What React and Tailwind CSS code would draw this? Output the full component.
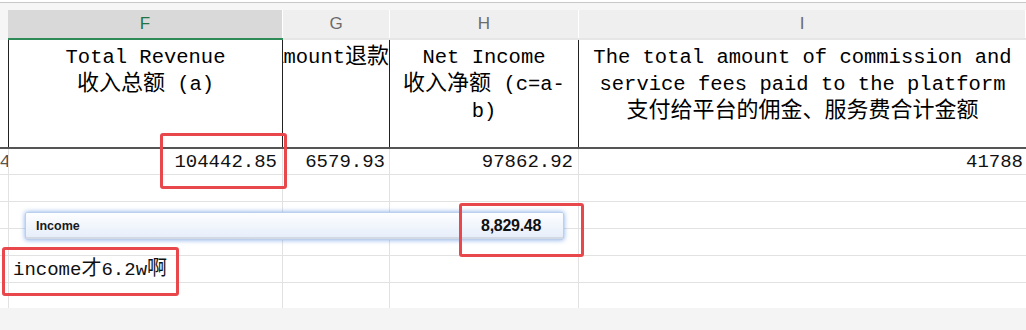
const mono = { fontFamily: '"Liberation Mono", "Noto Sans CJK SC", monospace' }

function Zh({ children }) {
  return <span className="text-[22px]">{children}</span>
}

function ColHead({ label, w, active }) {
  return (
    <div
      className={`flex items-center justify-center border-r border-white ${w} ${
        active ? 'bg-[#d9d9d9] text-[#217346]' : 'bg-[#efefef] text-[#6b6b6b]'
      }`}
    >
      {label}
    </div>
  )
}

function GridRow({ h, last, children }) {
  return (
    <div className={`flex ${h} ${last ? '' : 'border-b border-[#e2e2e2]'}`}>
      <div className="w-[9px] border-r border-[#e2e2e2]">{children?.[0]}</div>
      <div className="w-[274px] border-r border-[#e2e2e2]">{children?.[1]}</div>
      <div className="w-[107px] border-r border-[#e2e2e2]">{children?.[2]}</div>
      <div className="w-[189px] border-r border-[#e2e2e2]">{children?.[3]}</div>
      <div className="flex-1">{children?.[4]}</div>
    </div>
  )
}

export default function App() {
  return (
    <div className="relative h-[330px] w-[1026px] overflow-hidden bg-white text-[#111]">
      {/* column letters */}
      <div className="h-[2px] bg-white" />
      <div className="h-px bg-[#c8c8c8]" />
      <div className="h-[7px] bg-[#f6f6f6]" />
      <div
        className="flex h-[28px] bg-[#f6f6f6] text-[17px]"
        style={{ fontFamily: '"Liberation Sans", Arial, sans-serif' }}
      >
        <div className="w-[8px]" />
        <ColHead label="F" w="w-[275px]" active />
        <ColHead label="G" w="w-[107px]" />
        <ColHead label="H" w="w-[189px]" />
        <ColHead label="I" w="flex-1" />
      </div>
      <div className="flex h-[2px]">
        <div className="w-[8px] bg-[#f6f6f6]" />
        <div className="w-[275px] bg-[#2e8b57]" />
        <div className="flex-1 bg-[#e6e6e6]" />
      </div>

      {/* header row */}
      <div
        className="flex h-[109px] border-b-2 border-[#555] text-[20.5px] leading-[27px] text-black"
        style={mono}
      >
        <div className="w-[9px] border-r border-[#222]" />
        <div className="w-[274px] border-r border-[#222] pt-[4px] text-center">
          Total Revenue
          <br />
          <Zh>收入总额</Zh> (a)
        </div>
        <div className="flex w-[107px] justify-end overflow-hidden whitespace-nowrap border-r border-[#222] pt-[4px]">
          <span>
            Amount<Zh>退款</Zh>
          </span>
        </div>
        <div className="w-[189px] border-r border-[#222] pt-[4px] text-center whitespace-nowrap">
          Net Income
          <br />
          <Zh>收入净额</Zh> (c=a-
          <br />
          b)
        </div>
        <div className="flex-1 pt-[4px] text-center whitespace-nowrap">
          The total amount of commission and
          <br />
          service fees paid to the platform
          <br />
          <Zh>支付给平台的佣金、服务费合计金额</Zh>
        </div>
      </div>

      {/* data rows */}
      <div className="text-[19px] leading-[24px]" style={mono}>
        <GridRow h="h-[26px]">
          <div className="flex h-full items-end justify-end overflow-hidden">
            <span className="-mr-[3px] text-[#555]">4</span>
          </div>
          <div className="flex h-full items-end justify-end pr-[5px]">104442.85</div>
          <div className="flex h-full items-end justify-end pr-[4px]">6579.93</div>
          <div className="flex h-full items-end justify-end pr-[5px]">97862.92</div>
          <div className="flex h-full items-end justify-end pr-[3px]">41788</div>
        </GridRow>
        <GridRow h="h-[27px]" />
        <GridRow h="h-[27px]" />
        <GridRow h="h-[27px]" />
        <GridRow h="h-[27px]">
          <div />
          <div className="flex h-full items-end whitespace-nowrap pl-[4px]">
            income<span className="text-[20px]">才</span>6.2w<span className="text-[20px]">啊</span>
          </div>
        </GridRow>
        <GridRow h="h-[25px]" last />
      </div>
      <div className="h-[30px] bg-[#f4f4f4]" />

      {/* pasted income bar */}
      <div
        className="absolute left-[25px] top-[212px] flex h-[28px] w-[539px] items-center justify-between rounded-[2px] border border-[#bcd0ee] bg-gradient-to-b from-[#fdfeff] to-[#e5edf9] pl-[10px] pr-[22px] shadow-[0_0_5px_rgba(80,135,225,0.7),inset_0_-2px_0_#d3d9e2]"
        style={{ fontFamily: '"Liberation Sans", Arial, sans-serif' }}
      >
        <span className="text-[12.5px] font-bold text-[#1a1a1a]">Income</span>
        <span className="text-[16px] font-bold tracking-[-0.3px] text-[#111]">8,829.48</span>
      </div>

      {/* annotation boxes */}
      <div className="absolute left-[160px] top-[133px] h-[56px] w-[127px] rounded-[3px] border-[3px] border-[#e8474b]" />
      <div className="absolute left-[459px] top-[203px] h-[54px] w-[125px] rounded-[3px] border-[3px] border-[#e8474b]" />
      <div className="absolute left-[2px] top-[247px] h-[49px] w-[177px] rounded-[3px] border-[3px] border-[#e8474b]" />
    </div>
  )
}
